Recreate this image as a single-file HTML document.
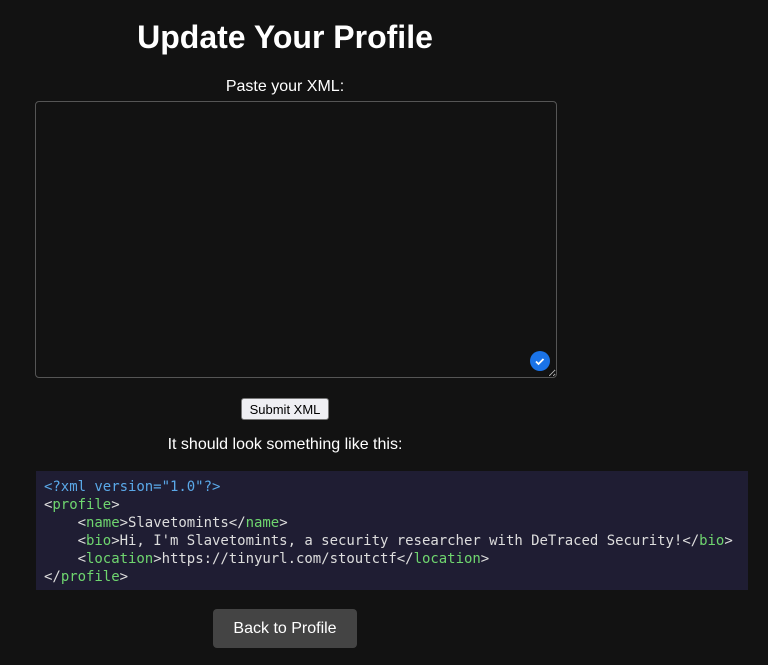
<!DOCTYPE html>
<html><head><style>
body{margin:0;background:#121212;width:768px;height:665px;overflow:hidden;font-family:"Liberation Sans",sans-serif;color:#fff;position:relative}
.a{position:absolute}
h1{position:absolute;left:0;width:570px;text-align:center;top:19px;margin:0;font-size:32px;font-weight:bold}
.lbl{left:0;width:570px;text-align:center;font-size:16px}
textarea{position:absolute;left:35px;top:101px;width:522px;height:277px;box-sizing:border-box;background:#121212;border:1px solid #555;border-radius:4px;resize:both}
.chk{left:530px;top:351px;width:20px;height:20px;border-radius:50%;background:#1a73e8}
button{position:absolute;left:241px;top:398px;width:88px;height:22px;font-family:"Liberation Sans",sans-serif;font-size:13px;background:#efeff3;border:1px solid #777;border-radius:3px;padding:0;color:#000}
pre{position:absolute;left:36px;top:471px;width:712px;height:119px;box-sizing:border-box;margin:0;padding:7px 8px;background:#1f1d33;font-family:"DejaVu Sans Mono",monospace;font-size:14px;line-height:18px;color:#ddd;letter-spacing:-0.03px}
.d{color:#5aa8e8}.t{color:#6fd66f}
.back{left:213px;top:609px;width:144px;height:39px;background:#444;border-radius:4px;text-align:center;line-height:39px;font-size:16px}
</style></head><body>
<h1>Update Your Profile</h1>
<div class="a lbl" style="top:78px">Paste your XML:</div>
<textarea></textarea>
<div class="a chk"><svg width="20" height="20"><path d="M6 10.5l2.5 2.5 5-5" stroke="#fff" stroke-width="1.8" fill="none"/></svg></div>
<button>Submit XML</button>
<div class="a lbl" style="top:436px">It should look something like this:</div>
<pre><span class="d">&lt;?xml version="1.0"?&gt;</span>
&lt;<span class="t">profile</span>&gt;
    &lt;<span class="t">name</span>&gt;Slavetomints&lt;/<span class="t">name</span>&gt;
    &lt;<span class="t">bio</span>&gt;Hi, I'm Slavetomints, a security researcher with DeTraced Security!&lt;/<span class="t">bio</span>&gt;
    &lt;<span class="t">location</span>&gt;https://tinyurl.com/stoutctf&lt;/<span class="t">location</span>&gt;
&lt;/<span class="t">profile</span>&gt;</pre>
<div class="a back">Back to Profile</div>
</body></html>
